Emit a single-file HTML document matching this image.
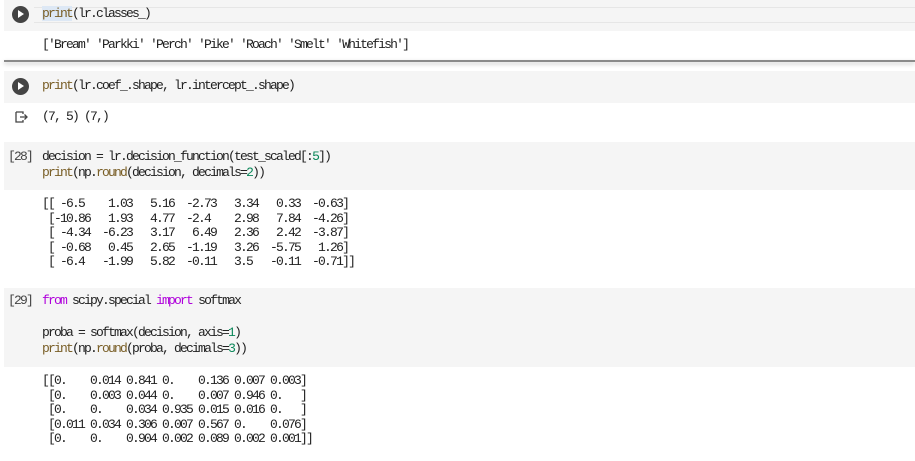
<!DOCTYPE html>
<html><head><style>
body{margin:0;width:915px;height:461px;background:#fff;overflow:hidden;position:relative;font-family:"Liberation Mono","Noto Sans CJK KR",monospace;font-size:13px;color:#212121;}
.bg{position:absolute;background:#f5f5f5;}
.t{position:absolute;white-space:pre;letter-spacing:-1.8px;line-height:16px;}
.o{line-height:14.5px;}
.k{color:#795e26}.p{color:#af00db}.n{color:#098658}
.play{position:absolute;width:17px;height:17px;border-radius:50%;background:#444;}
.play:after{content:"";position:absolute;left:6px;top:4px;border-left:6px solid #fff;border-top:4.5px solid transparent;border-bottom:4.5px solid transparent;}
.lbl{position:absolute;left:8px;color:#444;}
</style></head><body>
<div class="bg" style="left:4px;top:0;width:911px;height:31px;"></div>
<div style="position:absolute;left:34px;top:7px;width:881px;height:1px;background:#e6e6e6"></div>
<div style="position:absolute;left:34px;top:22px;width:881px;height:1px;background:#e6e6e6"></div>
<div style="position:absolute;left:4px;top:60px;width:911px;height:2px;background:#8a8a8a;box-shadow:0 2px 4px rgba(0,0,0,.25)"></div>
<div class="play" style="left:12px;top:6px"></div>
<div class="t" style="left:42px;top:6px"><span class="k" style="background:#dde8f5">print</span>(lr.classes_)</div>
<div class="t" style="left:42px;top:37px">['Bream' 'Parkki' 'Perch' 'Pike' 'Roach' 'Smelt' 'Whitefish']</div>

<div class="bg" style="left:4px;top:71px;width:911px;height:32px;"></div>
<div class="play" style="left:12px;top:78px"></div>
<div class="t" style="left:42px;top:78px"><span class="k">print</span>(lr.coef_.shape, lr.intercept_.shape)</div>
<svg style="position:absolute;left:15px;top:111px" width="14" height="12"><path d="M1 1H8V3M1 1V11H8V9M5 6H12M9.5 3.5L12 6L9.5 8.5" fill="none" stroke="#444" stroke-width="1.3"/></svg>
<div class="t" style="left:42px;top:109px">(7, 5) (7,)</div>

<div class="bg" style="left:4px;top:142px;width:911px;height:48px;"></div>
<div class="t lbl" style="top:149px">[28]</div>
<div class="t" style="left:42px;top:149px">decision = lr.decision_function(test_scaled[:<span class="n">5</span>])
<span class="k">print</span>(np.<span class="k">round</span>(decision, decimals=<span class="n">2</span>))</div>
<div class="t o" style="left:42px;top:197px">[[ -6.5    1.03   5.16  -2.73   3.34   0.33  -0.63]
 [-10.86   1.93   4.77  -2.4    2.98   7.84  -4.26]
 [ -4.34  -6.23   3.17   6.49   2.36   2.42  -3.87]
 [ -0.68   0.45   2.65  -1.19   3.26  -5.75   1.26]
 [ -6.4   -1.99   5.82  -0.11   3.5   -0.11  -0.71]]</div>

<div class="bg" style="left:4px;top:288px;width:911px;height:79px;"></div>
<div class="t lbl" style="top:293px">[29]</div>
<div class="t" style="left:42px;top:293px"><span class="p">from</span> scipy.special <span class="p">import</span> softmax

proba = softmax(decision, axis=<span class="n">1</span>)
<span class="k">print</span>(np.<span class="k">round</span>(proba, decimals=<span class="n">3</span>))</div>
<div class="t o" style="left:42px;top:374px">[[0.    0.014 0.841 0.    0.136 0.007 0.003]
 [0.    0.003 0.044 0.    0.007 0.946 0.   ]
 [0.    0.    0.034 0.935 0.015 0.016 0.   ]
 [0.011 0.034 0.306 0.007 0.567 0.    0.076]
 [0.    0.    0.904 0.002 0.089 0.002 0.001]]</div>
</body></html>
